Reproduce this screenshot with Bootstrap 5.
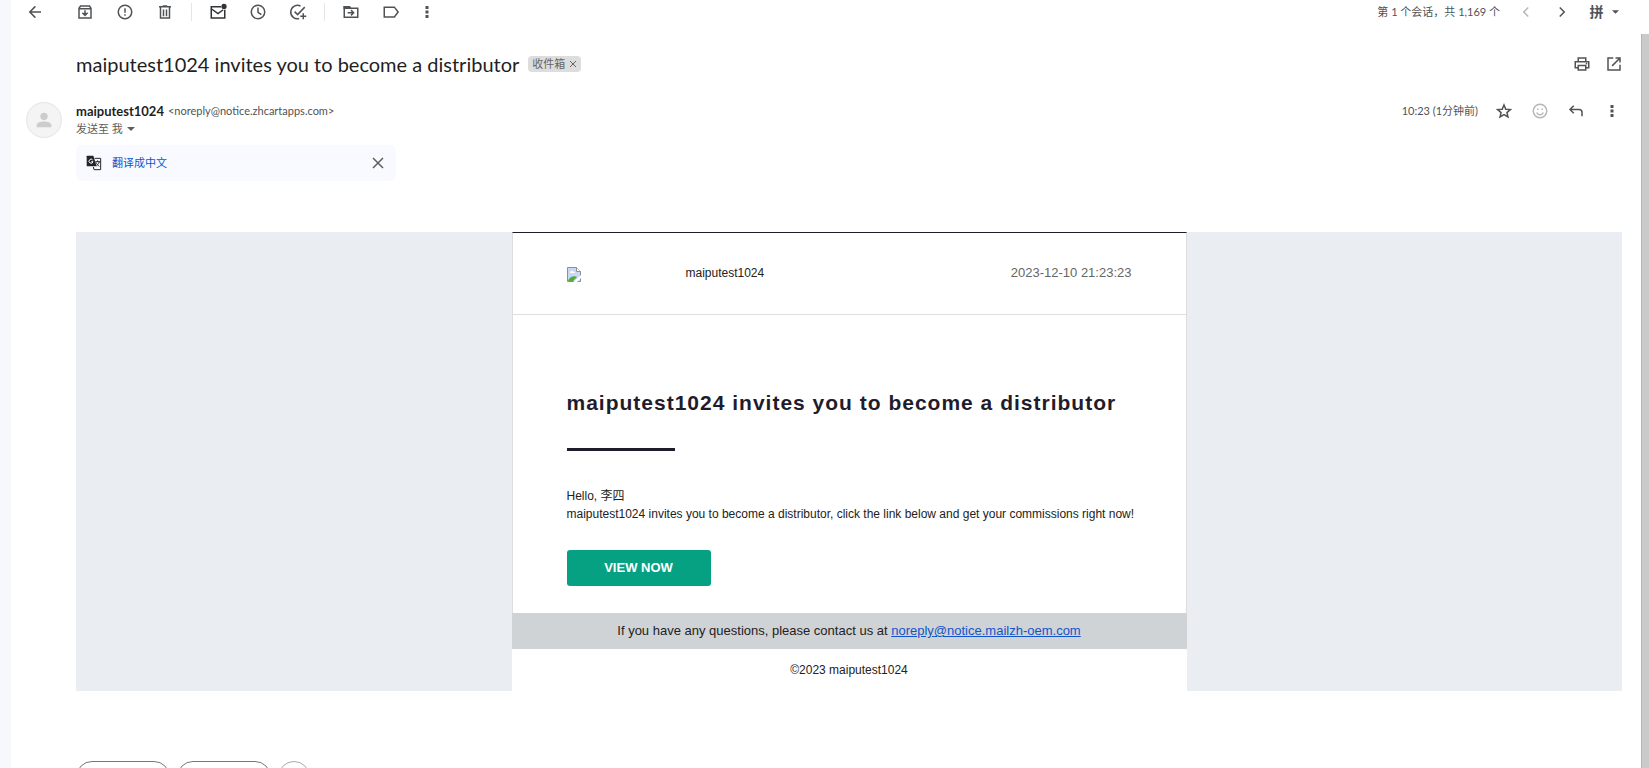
<!DOCTYPE html>
<html lang="zh-CN">
<head>
<meta charset="utf-8">
<meta name="viewport" content="width=device-width, initial-scale=1">
<title>maiputest1024 invites you to become a distributor</title>
<link rel="stylesheet" href="https://cdn.jsdelivr.net/npm/bootstrap@5.3.0/dist/css/bootstrap.min.css">
<style>
  body { font-family: Lato, "Noto Sans CJK SC", sans-serif; font-size: 12px; line-height: 18px; color: #5e5e5e; background: #f6f8fc; }
  svg { display: block; fill: none; stroke: currentColor; stroke-width: 2; }
  .pane { margin-left: 11px; background: #fff; }
  .toolbar { height: 34px; padding: 0 25px 10px 4px; color: #505356; }
  .tool { width: 40px; height: 24px; padding: 0; border: 0; background: none; color: inherit; display: flex; align-items: center; justify-content: center; flex: none; }
  .tool-back { margin-right: 10px; }
  .tool-slim { width: 32px; }
  .tool-wide { width: 36px; }
  .tool-faint { color: #b5b6b7; }
  .tool-strong { color: #303336; }
  .divider { width: 1px; height: 18px; background: #e4e5e7; margin: 0 6px; }
  .ime { font-size: 14px; line-height: 18px; }
  .small-text { font-size: 11px; }
  .scroll-thumb { width: 8px; background: #cacaca; border-left: 1px solid #b4b4b4; }
  .thread { padding: 18px 19px 0 0; }
  .edge-row { margin-right: -8px; color: #505356; }
  .gutter { width: 65px; padding-left: 15px; }
  .subject { font-size: 20px; line-height: 24px; font-weight: 400; color: #1f1f1f; }
  .inbox-tag { height: 16px; background: #ddd; border-radius: 4px; padding: 0 4px; color: #666; line-height: 16px; margin-left: 9px; }
  .inbox-tag button, .bare { border: 0; background: none; padding: 0; color: inherit; }
  .message-head { margin-top: 26px; }
  .meta-row { height: 18px; }
  .avatar { width: 36px; height: 36px; background: #f4f4f4; border: 1px solid #e4e4e4; color: #ccc; }
  .sender { font-size: 13px; font-weight: 700; color: #1f1f1f; }
  .translate { width: 320px; max-width: 100%; height: 36px; border-radius: 6px; background: #f9faff; padding: 0 10px; margin: 7px 0 51px; gap: 10px; }
  .translate a { color: #0b57d0; }
  .mail-back { background: #eaedf2; font-family: "Liberation Sans", "Noto Sans CJK SC", sans-serif; color: #222; }
  .mail-card { max-width: 675px; background: #fff; }
  .mail-main { border: 1px solid #ddd; border-top-color: #1f1c2e; border-bottom: 0; }
  .mail-head { height: 82px; padding: 0 54px 2px; border-bottom: 1px solid #ddd; }
  .logo-cell { width: 119px; }
  .mail-date { font-size: 13px; color: #666; }
  .mail-body { padding: 72px 54px 27px; }
  .mail-title { font-size: 21px; line-height: 32px; letter-spacing: 1px; font-weight: 700; color: #1f1c2b; margin: 0 -20px 29px 0; }
  .rule { width: 108px; height: 3px; background: #1f1c2b; margin-bottom: 36px; }
  .mail-text { margin: 0 -20px 27px 0; color: #222; }
  .view-btn { width: 144px; height: 36px; border: 0; border-radius: 3px; background: #06a082; color: #fff; font-size: 13px; font-weight: 700; padding: 0; }
  .contact { height: 36px; background: #cfd3d6; font-size: 13px; }
  .contact a { color: #15c; }
  .copyright { height: 42px; }
  .actions { margin-top: 70px; gap: 7px; }
  .pill { width: 94px; height: 32px; border: 1px solid #747775; border-radius: 16px; background: #fff; padding: 0; }
  .pill-round { width: 32px; border-color: #aaa; }
</style>
</head>
<body class="vh-100 overflow-hidden">
<main class="pane vh-100 d-flex flex-column">
  <div class="toolbar d-flex align-items-center flex-shrink-0" role="toolbar" aria-label="邮件操作">
    <button class="tool tool-back" aria-label="返回"><svg width="18" height="18" viewBox="0 0 24 24"><path d="M20 12H5.500M12.500 4.500 5 12l7.500 7.500"/></svg></button>
    <button class="tool" aria-label="归档"><svg width="18" height="18" viewBox="0 0 24 24"><path d="M4 7v13h16V7l-2-3H6zM4 7.500h16M12 9.500v6M8.500 13l3.500 3.500 3.500-3.500"/></svg></button>
    <button class="tool" aria-label="举报"><svg width="18" height="18" viewBox="0 0 24 24"><circle cx="12" cy="12" r="9"/><path d="M12 7v6M12 15v2"/></svg></button>
    <button class="tool" aria-label="删除"><svg width="18" height="18" viewBox="0 0 24 24"><path d="M6 6v14h12V6M4 5h16M9 4h6M10 8.500v9M14 8.500v9"/></svg></button>
    <span class="divider"></span>
    <button class="tool tool-strong" aria-label="标记为未读"><svg width="18" height="18" viewBox="0 0 24 24"><path d="M16 5H3v15h18V9M3.500 8l8.500 6 7-5"/><circle cx="20" cy="4.500" r="3.500" fill="currentColor" stroke="none"/></svg></button>
    <button class="tool" aria-label="延后"><svg width="18" height="18" viewBox="0 0 24 24"><circle cx="12" cy="12" r="9"/><path d="M12 6v6.500l4.500 3"/></svg></button>
    <button class="tool" aria-label="添加到任务"><svg width="18" height="18" viewBox="0 0 24 24"><path d="M15.500 4.100A9 9 0 1 0 13.500 20.800M7.500 11.500l4 4L21 5.500M19 13.500v8M15 17.500h8"/></svg></button>
    <span class="divider"></span>
    <button class="tool" aria-label="移至"><svg width="18" height="18" viewBox="0 0 24 24"><path d="M2 7h19v12H3V5h7l2 2M7.500 13h7M12 9.500l3.500 3.500-3.500 3.500"/><path d="M2 4h8l3 4H2z" fill="currentColor" stroke="none"/></svg></button>
    <button class="tool" aria-label="标签"><svg width="18" height="18" viewBox="0 0 24 24"><path d="M3 5.500h13.500L21.500 12l-5 6.500H3z"/></svg></button>
    <button class="tool tool-slim" aria-label="更多"><svg width="18" height="18" viewBox="0 0 24 24"><path d="M12 4v4M12 10v4M12 16v4" stroke-width="4"/></svg></button>
    <span class="small-text ms-auto me-2">第 1 个会话，共 1,169 个</span>
    <button class="tool tool-wide tool-faint" aria-label="较新"><svg width="18" height="18" viewBox="0 0 24 24"><path d="m15 6-6 6 6 6"/></svg></button>
    <button class="tool tool-wide" aria-label="较旧"><svg width="18" height="18" viewBox="0 0 24 24"><path d="m9 6 6 6-6 6"/></svg></button>
    <button class="tool ms-1" aria-label="输入工具"><b class="ime">拼</b><svg class="ms-2" width="7" height="4" viewBox="0 0 8 4"><path d="M0 0h8L4 4z" fill="currentColor" stroke="none"/></svg></button>
  </div>

  <div class="d-flex flex-fill overflow-hidden">
    <div class="flex-fill thread">
      <div class="d-flex align-items-center edge-row">
        <div class="gutter flex-shrink-0"></div>
        <h1 class="subject m-0">maiputest1024 invites you to become a distributor</h1>
        <span class="inbox-tag small-text d-flex align-items-center">收件箱<button class="ms-1" aria-label="移除标签"><svg width="8" height="8" viewBox="0 0 8 8"><path d="m1 1 6 6M7 1 1 7" stroke-width="1"/></svg></button></span>
        <button class="tool tool-slim ms-auto" aria-label="打印"><svg width="18" height="18" viewBox="0 0 24 24"><path d="M7 8V4h10v4M7 17H3V9h18v8h-4M7 14h10v6H7z"/><path d="M17 11.500h2"/></svg></button>
        <button class="tool tool-slim" aria-label="在新窗口中打开"><svg width="18" height="18" viewBox="0 0 24 24"><path d="M11 4H4v16h16v-7M14 4h6v6M20 4 9.500 14.500"/></svg></button>
      </div>

      <div class="d-flex message-head">
        <div class="gutter flex-shrink-0"><div class="avatar rounded-circle d-flex align-items-center justify-content-center"><svg width="22" height="22" viewBox="0 0 24 24"><g fill="currentColor" stroke="none"><circle cx="12" cy="8" r="4"/><path d="M4 20v-2.500c0-3 5-4 8-4s8 1 8 4V20z"/></g></svg></div></div>
        <div class="flex-fill">
          <div class="d-flex align-items-center meta-row edge-row">
            <span class="sender">maiputest1024</span>
            <span class="small-text ms-1">&lt;noreply@notice.zhcartapps.com&gt;</span>
            <span class="small-text ms-auto me-2">10:23 (1分钟前)</span>
            <button class="tool tool-wide" aria-label="加星标"><svg width="18" height="18" viewBox="0 0 24 24"><path d="m12 4 2.400 5.600 6.100.5-4.600 4 1.400 5.900-5.300-3.200L6.700 20l1.400-5.900-4.600-4 6.100-.5z"/></svg></button>
            <button class="tool tool-wide tool-faint" aria-label="添加回应"><svg width="18" height="18" viewBox="0 0 24 24"><circle cx="12" cy="12" r="9"/><path d="M7.500 14c2 4 7 4 9 0M8 9.500h2M14 9.500h2"/></svg></button>
            <button class="tool tool-wide" aria-label="回复"><svg width="18" height="18" viewBox="0 0 24 24"><path d="M9 5 4 10l5 5M4.500 10H16c3 0 4 2 4 4v5"/></svg></button>
            <button class="tool tool-wide" aria-label="更多"><svg width="18" height="18" viewBox="0 0 24 24"><path d="M12 4v4M12 10v4M12 16v4" stroke-width="4"/></svg></button>
          </div>
          <button class="bare small-text d-flex align-items-center">发送至 我<svg class="ms-1" width="8" height="4" viewBox="0 0 8 4"><path d="M0 0h8L4 4z" fill="currentColor" stroke="none"/></svg></button>
          <div class="translate d-flex align-items-center small-text">
            <svg width="16" height="16" viewBox="0 0 24 24" class="text-dark"><path d="M2 1h9l5 16H2a1 1 0 0 1-1-1V2a1 1 0 0 1 1-1z" fill="currentColor" stroke="none"/><path d="M10 7.500A3 3 0 1 0 10.500 10H8" stroke="#fff" stroke-width="1.500"/><path d="M13 5h9v17H12l-1-4M14 10h7M17.500 8v2M20 10c-1 4-3 5-4 6M15 11c1 3 4 5 5 6" stroke-width="1.500"/></svg>
            <a href="#" class="text-decoration-none">翻译成中文</a>
            <button class="bare ms-auto tool-strong" aria-label="关闭"><svg width="16" height="16" viewBox="0 0 16 16"><path d="m3 3 10 10M13 3 3 13" stroke-width="1.500"/></svg></button>
          </div>
        </div>
      </div>

      <div class="d-flex">
        <div class="gutter flex-shrink-0"></div>
        <div class="flex-fill">
          <article class="mail-back">
            <div class="mail-card mx-auto">
              <div class="mail-main">
                <div class="mail-head d-flex align-items-center">
                  <div class="logo-cell"><svg class="mt-1" width="14" height="15" viewBox="0 0 14 15" stroke="none"><path d="M.5.500h9l4 4v10H.5z" fill="#c9d8f5" stroke="#909090" stroke-width="1"/><path d="M9.500.500v4h4" fill="#fff" stroke="#909090" stroke-width="1"/><path d="M3 6c0-2 3-3 4-1 1 0 1 1 1 1z" fill="#fff" stroke="none"/><path d="M1 14c1-4 6-6 9-4l-4 4z" fill="#4faa3b" stroke="none"/><path d="m6.500 15 7.500-7v3l-4 4z" fill="#fff" stroke="none"/></svg></div>
                  <span>maiputest1024</span>
                  <time class="mail-date ms-auto">2023-12-10 21:23:23</time>
                </div>
                <div class="mail-body">
                  <h2 class="mail-title">maiputest1024 invites you to become a distributor</h2>
                  <div class="rule"></div>
                  <p class="mail-text">Hello, 李四<br>maiputest1024 invites you to become a distributor, click the link below and get your commissions right now!</p>
                  <button class="view-btn d-block">VIEW NOW</button>
                </div>
              </div>
              <div class="contact d-flex align-items-center justify-content-center"><span>If you have any questions, please contact us at <a href="mailto:noreply@notice.mailzh-oem.com">noreply@notice.mailzh-oem.com</a></span></div>
              <div class="copyright d-flex align-items-center justify-content-center">©2023 maiputest1024</div>
            </div>
          </article>
          <div class="actions d-flex">
            <button class="pill" aria-label="回复"></button>
            <button class="pill" aria-label="转发"></button>
            <button class="pill pill-round" aria-label="添加表情回应"></button>
          </div>
        </div>
      </div>
    </div>
    <div class="scroll-thumb flex-shrink-0"></div>
  </div>
</main>
<script src="https://cdn.jsdelivr.net/npm/bootstrap@5.3.0/dist/js/bootstrap.bundle.min.js"></script>
</body>
</html>
